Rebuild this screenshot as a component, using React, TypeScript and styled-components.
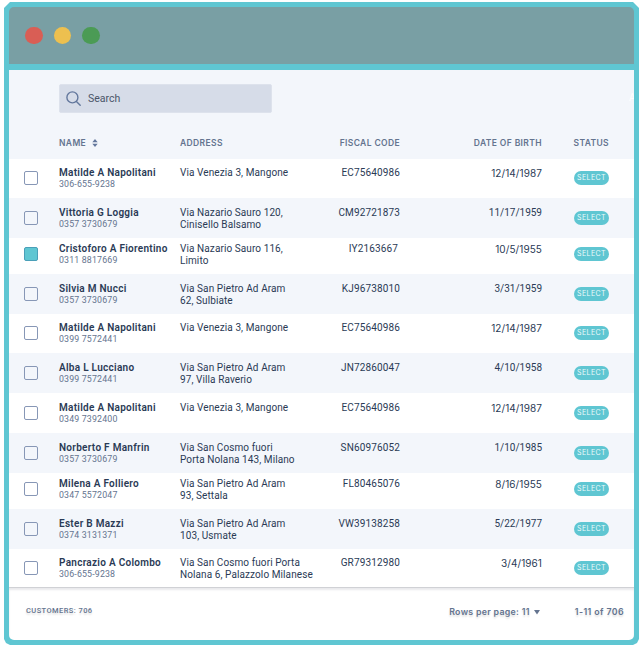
import React from "react";
import styled, { createGlobalStyle } from "styled-components";

const Global = createGlobalStyle`
  *{box-sizing:border-box}
  body{margin:0;background:#fff;font-family:Roboto,"Liberation Sans",sans-serif;color:#2a3a55;overflow:hidden}
`;
const Frame = styled.main`
  width:635px;height:643px;margin:2px 0 0 4px;padding:5px;background:#5fc6d2;
  clip-path:polygon(6px 0,629px 0,635px 6px,635px 637px,633px 641px,629px 643px,6px 643px,2px 641px,0 637px,0 6px);
`;
const TitleBar = styled.header`
  height:57px;background:#799fa4;border-radius:5px 5px 0 0;display:flex;align-items:center;gap:11px;padding-left:16px;
`;
const Dot = styled.span<{ $color: string }>`
  width:17.5px;height:17.5px;border-radius:50%;background:${p => p.$color};
`;
const Panel = styled.section`
  margin-top:6px;height:570px;background:#fff;border-radius:0 0 5px 5px;overflow:hidden;
`;
const Tools = styled.div`
  height:57px;background:#f3f6fb;padding:14px 0 0 50px;display:flex;justify-content:space-between;
`;
const Search = styled.label`
  width:213px;height:29px;border-radius:2px;background:#d6dce8;border:1px solid #dde2ec;
  display:flex;align-items:center;gap:7px;padding-left:6px;font-size:10.5px;letter-spacing:0;color:#4a5568;
`;
const Clipped = styled.span`
  width:5px;height:28px;line-height:28px;overflow:hidden;color:#fff;font-size:10px;
`;
const columns = "50px 121px 126px 94px 142px 1fr";
const Head = styled.div`
  height:32px;background:#f3f6fb;display:grid;grid-template-columns:${columns};align-items:start;padding-top:9px;
  font:600 8.5px/14px Inter,sans-serif;letter-spacing:.38px;color:#64748f;
`;
const HeadCell = styled.div<{ $end?: boolean }>`
  height:14px;white-space:nowrap;
  display:flex;gap:6px;align-items:center;justify-content:${p => (p.$end ? "flex-end" : "flex-start")};
`;
const StatusHead = styled(HeadCell)`padding-left:31.5px;`;
const Row = styled.div<{ $height: number; $tint: boolean }>`
  height:${p => p.$height}px;padding-top:${p => (p.$height === 36 ? 5 : p.$height < 40 ? 8 : 8.5)}px;
  background:${p => (p.$tint ? "#f3f6fb" : "#fff")};
  display:grid;grid-template-columns:${columns};align-items:start;
`;
const Check = styled.div<{ $on: boolean }>`
  width:14px;height:14px;margin:4px 0 0 15px;border-radius:2px;
  border:1px solid ${p => (p.$on ? "#4a9fb8" : "#8797b6")};background:${p => (p.$on ? "#5fc6d2" : "transparent")};
`;
const Name = styled.div`font-size:10px;line-height:12px;font-weight:600;letter-spacing:.28px;white-space:nowrap;`;
const Phone = styled.div`font-size:8.8px;line-height:10px;letter-spacing:.16px;color:#64748f;`;
const Address = styled.div`font-size:10px;line-height:12px;letter-spacing:.09px;white-space:pre;`;
const Code = styled.div<{ $inset: boolean }>`
  font-size:10px;line-height:12px;letter-spacing:.14px;text-align:right;padding-right:${p => (p.$inset ? 2 : 0)}px;
`;
const Birth = styled.div<{ $inter: boolean }>`
  font-family:${p => (p.$inter ? "Inter" : "Roboto")},sans-serif;font-size:10px;line-height:12px;
  letter-spacing:${p => (p.$inter ? 0.08 : 0)}px;text-align:right;
`;
const Pill = styled.button`
  width:35px;height:14px;margin:4px 0 0 31.5px;padding:0 0 0 1px;border:0;border-radius:7px;background:#5fc6d2;color:#eefafb;
  font:400 7px/14px Inter,sans-serif;letter-spacing:.4px;text-align:center;
`;
const Footer = styled.footer`
  height:52px;border-top:1px solid #d0d1d5;box-shadow:inset 0 2px 2px #e9e9ec;display:flex;padding:16px 10px 0 17px;
  font-weight:500;color:#64748f;text-shadow:0 2px 2px #0002;
`;
const Total = styled.div`font-size:7.5px;line-height:14px;letter-spacing:.42px;flex:1;`;
const Paging = styled.div`
  font:600 8.8px/16px Inter,sans-serif;letter-spacing:.3px;display:flex;align-items:center;gap:4px;height:16px;
`;
const Range = styled(Paging)`margin-left:35px;letter-spacing:.4px;`;

type Customer = { name: string; phone: string; address: string; code: string; birth: string; height: number; inter?: boolean; on?: boolean };
const customers: Customer[] = [
  { name: "Matilde A Napolitani", phone: "306-655-9238", address: "Via Venezia 3, Mangone", code: "EC75640986", birth: "12/14/1987", height: 39, inter: true },
  { name: "Vittoria G Loggia", phone: "0357 3730679", address: "Via Nazario Sauro 120,\nCinisello Balsamo", code: "CM92721873", birth: "11/17/1959", height: 40 },
  { name: "Cristoforo A Fiorentino", phone: "0311 8817669", address: "Via Nazario Sauro 116,\nLimito", code: "IY2163667", birth: "10/5/1955", height: 36, inter: true, on: true },
  { name: "Silvia M Nucci", phone: "0357 3730679", address: "Via San Pietro Ad Aram\n62, Sulbiate", code: "KJ96738010", birth: "3/31/1959", height: 40 },
  { name: "Matilde A Napolitani", phone: "0399 7572441", address: "Via Venezia 3, Mangone", code: "EC75640986", birth: "12/14/1987", height: 39, inter: true },
  { name: "Alba L Lucciano", phone: "0399 7572441", address: "Via San Pietro Ad Aram\n97, Villa Raverio", code: "JN72860047", birth: "4/10/1958", height: 40 },
  { name: "Matilde A Napolitani", phone: "0349 7392400", address: "Via Venezia 3, Mangone", code: "EC75640986", birth: "12/14/1987", height: 40, inter: true },
  { name: "Norberto F Manfrin", phone: "0357 3730679", address: "Via San Cosmo fuori\nPorta Nolana 143, Milano", code: "SN60976052", birth: "1/10/1985", height: 40 },
  { name: "Milena A Folliero", phone: "0347 5572047", address: "Via San Pietro Ad Aram\n93, Settala", code: "FL80465076", birth: "8/16/1955", height: 36, inter: true },
  { name: "Ester B Mazzi", phone: "0374 3131371", address: "Via San Pietro Ad Aram\n103, Usmate", code: "VW39138258", birth: "5/22/1977", height: 40 },
  { name: "Pancrazio A Colombo", phone: "306-655-9238", address: "Via San Cosmo fuori Porta\nNolana 6, Palazzolo Milanese", code: "GR79312980", birth: "3/4/1961", height: 38, inter: true },
];

export default function App() {
  return (
    <>
      <Global />
      <Frame>
        <TitleBar><Dot $color="#d95e55" /><Dot $color="#edc04f" /><Dot $color="#4b9b55" /></TitleBar>
        <Panel>
          <Tools>
            <Search>
              <svg width="15" height="15" viewBox="0 0 15 15" fill="none" stroke="#64789d" strokeWidth="1.4" strokeLinecap="round"><circle cx="6.4" cy="6.4" r="5.5" /><path d="M10.4 10.4 14.2 14.2" /></svg>
              Search
            </Search>
            <Clipped>A</Clipped>
          </Tools>
          <Head>
            <span />
            <HeadCell>NAME <svg width="6" height="8" viewBox="0 0 6 8" fill="#64789d"><path d="M3 0 5.7 3.3H.3zM3 8 .3 4.7h5.4z" /></svg></HeadCell>
            <HeadCell>ADDRESS</HeadCell>
            <HeadCell $end>FISCAL CODE</HeadCell>
            <HeadCell $end>DATE OF BIRTH</HeadCell>
            <StatusHead>STATUS</StatusHead>
          </Head>
          {customers.map((c, i) => (
            <Row key={i} $height={c.height} $tint={i % 2 === 1}>
              <Check $on={!!c.on} />
              <div><Name>{c.name}</Name><Phone>{c.phone}</Phone></div>
              <Address>{c.address}</Address>
              <Code $inset={c.code.length < 10}>{c.code}</Code>
              <Birth $inter={!!c.inter}>{c.birth}</Birth>
              <Pill>SELECT</Pill>
            </Row>
          ))}
          <Footer>
            <Total>CUSTOMERS: 706</Total>
            <Paging>Rows per page: 11 <svg width="6" height="5" viewBox="0 0 6 5" fill="#64748f"><path d="M0 0h6L3 4.5z" /></svg></Paging>
            <Range>1-11 of 706</Range>
          </Footer>
        </Panel>
      </Frame>
    </>
  );
}
